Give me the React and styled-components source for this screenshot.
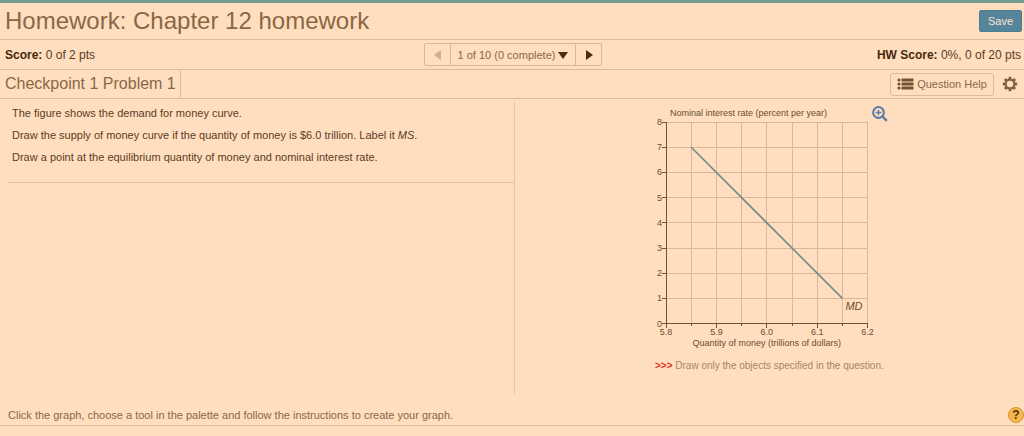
import React from 'react';
import styled, { createGlobalStyle } from 'styled-components';

const GlobalStyle = createGlobalStyle`
  * {
    box-sizing: border-box;
  }

  body {
    margin: 0;
    background: #ffdebf;
    color: #5a3c1e;
    font-family: 'Liberation Sans', Arial, sans-serif;
    font-size: 12px;
  }

  button {
    font-family: inherit;
    cursor: pointer;
  }
`;

const Page = styled.div`
  border-top: 3px solid #759c8f;
`;

const Bar = styled.div`
  display: flex;
  align-items: center;
  justify-content: space-between;
  height: ${({ $height }) => $height}px;
  padding: 0 3px 0 5px;
  border-bottom: 1px solid #dcbb9d;
`;

const Title = styled.h1`
  margin: 0;
  font-size: 24px;
  line-height: 32px;
  font-weight: 400;
  color: #8a6745;
`;

const SaveButton = styled.button`
  width: 43px;
  height: 22px;
  margin-right: -1px;
  padding: 0;
  border: 1px solid #4f7d94;
  border-radius: 2px;
  background: #55849b;
  color: #ffe6cf;
  font-size: 11px;
`;

const ScoreBar = styled(Bar)`
  display: grid;
  grid-template-columns: 1fr auto 1fr;
`;

const Score = styled.div`
  text-align: ${({ $align }) => $align || 'left'};

  b {
    color: #45290c;
  }
`;

const Pager = styled.div`
  display: flex;
  height: 23px;
  border: 1px solid #d9b797;
  border-radius: 2px;
`;

const PagerButton = styled.button`
  display: flex;
  align-items: center;
  justify-content: center;
  gap: 3px;
  width: ${({ $width }) => $width}px;
  padding: 0;
  border: none;
  border-right: 1px solid #d9b797;
  background: none;
  color: #8a6745;
  font-size: 11px;

  &:last-child {
    border-right: none;
  }
`;

const Subtitle = styled.h2`
  display: flex;
  align-items: center;
  align-self: stretch;
  margin: 0;
  padding-right: 4px;
  border-right: 1px solid #dcbb9d;
  font-size: 16px;
  font-weight: 400;
  color: #8a6745;
`;

const Tools = styled.div`
  display: flex;
  align-items: center;
  gap: 8px;
  padding-right: 3px;
`;

const HelpButton = styled.button`
  display: flex;
  align-items: center;
  justify-content: center;
  gap: 3px;
  width: 104px;
  height: 23px;
  padding: 0;
  border: 1px solid #dcbb9d;
  border-radius: 3px;
  background: none;
  color: #8a6745;
  font-size: 11px;
`;

const IconButton = styled.button`
  display: flex;
  padding: 0;
  border: none;
  background: none;
`;

const Content = styled.main`
  display: grid;
  grid-template-columns: 1fr 1fr;
  padding: 3px 2px 0 8px;
`;

const Question = styled.section`
  border-right: 1px solid #e5c3a4;
`;

const Prompt = styled.div`
  padding: 0 4px 14px;
  border-bottom: 1px solid #e5c3a4;
  font-size: 11px;
  line-height: 22px;

  p {
    margin: 0;
  }
`;

const GraphArea = styled.section`
  display: flex;
  justify-content: center;
  padding-bottom: 20px;
`;

const Graph = styled.figure`
  position: relative;
  width: 235px;
  margin: 0;
`;

const ZoomButton = styled(IconButton)`
  position: absolute;
  top: 4px;
  right: -2px;
`;

const Chart = styled.svg`
  display: block;
  font-size: 9px;
  fill: #6b4c2e;
`;

const Hint = styled.figcaption`
  padding: 8px 0 0 4px;
  font-size: 10px;
  line-height: 16px;
  white-space: nowrap;
  color: #a9845f;

  b {
    color: #e0301e;
  }
`;

const Footer = styled.footer`
  display: flex;
  align-items: center;
  justify-content: space-between;
  height: 32px;
  padding: 10px 0 0 8px;
  border-bottom: 1px solid #dcbb9d;
  font-size: 11px;
  color: #8a6745;
`;

const HelpBadge = styled.button`
  width: 16px;
  height: 16px;
  padding: 0;
  border: 1px solid #d9912f;
  border-radius: 50%;
  background: #f7b64a;
  color: #50300f;
  font-size: 12px;
  font-weight: 700;
  line-height: 14px;
`;

const ListIcon = () => (
  <svg width="17" height="12" viewBox="0 0 17 12" fill="#735131">
    {[0, 4, 8].map((y) => (
      <g key={y}>
        <circle cx="2" cy={y + 2} r="1.6" />
        <rect x="4.5" y={y + 0.5} width="12" height="3" rx="0.5" />
      </g>
    ))}
  </svg>
);

const GearIcon = () => (
  <svg width="16" height="16" viewBox="0 0 16 16" fill="none" stroke="#806040">
    <circle cx="8" cy="8" r="4.4" strokeWidth="2.2" />
    {[0, 45, 90, 135, 180, 225, 270, 315].map((angle) => (
      <path key={angle} d="M8 3V0.8" strokeWidth="2.8" transform={`rotate(${angle} 8 8)`} />
    ))}
  </svg>
);

const ZoomIcon = () => (
  <svg width="16" height="16" viewBox="0 0 16 16" fill="none" stroke="#5a7ba6">
    <circle cx="6.5" cy="6.5" r="5.4" strokeWidth="2" />
    <path d="M3.7 6.5H9.3M6.5 3.7V9.3" strokeWidth="1.4" />
    <path d="M10.5 10.5L14.8 14.8" strokeWidth="2.4" />
  </svg>
);

const Arrow = ({ d, color }) => (
  <svg width="10" height="10" viewBox="0 0 10 10" fill={color}>
    <path d={d} />
  </svg>
);

// plot area of the chart, in svg units
const LEFT = 15;
const TOP = 20;
const STEP = 25.2;
const SIZE = STEP * 8;
const steps = [0, 1, 2, 3, 4, 5, 6, 7, 8];
const xLabels = ['5.8', '5.9', '6.0', '6.1', '6.2'];

const MoneyChart = () => (
  <Chart width="235" height="248" viewBox="0 0 235 248" role="img" aria-label="Demand for money curve">
    <text x={LEFT + 4} y="14">Nominal interest rate (percent per year)</text>

    <g stroke="#d9b797" shapeRendering="crispEdges">
      {steps.map((i) => (
        <React.Fragment key={i}>
          <path d={`M${LEFT + i * STEP} ${TOP}v${SIZE}`} />
          <path d={`M${LEFT} ${TOP + i * STEP}h${SIZE}`} />
        </React.Fragment>
      ))}
    </g>

    <g stroke="#735131" shapeRendering="crispEdges">
      <path d={`M${LEFT} ${TOP}v${SIZE}h${SIZE}`} fill="none" />
      {steps.map((i) => (
        <React.Fragment key={i}>
          <path d={`M${LEFT + i * STEP} ${TOP + SIZE}v${i % 2 ? 2 : 4}`} />
          <path d={`M${LEFT - 4} ${TOP + i * STEP}h4`} />
        </React.Fragment>
      ))}
    </g>

    {steps.map((i) => (
      <text key={i} x={LEFT - 4} y={TOP + (8 - i) * STEP + 3} textAnchor="end">{i}</text>
    ))}
    {xLabels.map((label, i) => (
      <text key={label} x={LEFT + i * 2 * STEP} y={TOP + SIZE + 11} textAnchor="middle">{label}</text>
    ))}

    <path
      d={`M${LEFT + STEP} ${TOP + STEP}L${LEFT + 7 * STEP} ${TOP + 7 * STEP}`}
      stroke="#6f8e8b"
      strokeWidth="1.6"
    />
    <text x={LEFT + 7 * STEP + 3} y={TOP + 7 * STEP + 12} fontSize="11" fontStyle="italic">MD</text>
    <text x={LEFT + SIZE / 2} y={TOP + SIZE + 22} textAnchor="middle">
      Quantity of money (trillions of dollars)
    </text>
  </Chart>
);

const App = () => {
  return (
    <>
      <GlobalStyle />
      <Page>
        <Bar $height={37}>
          <Title>Homework: Chapter 12 homework</Title>
          <SaveButton type="button">Save</SaveButton>
        </Bar>

        <ScoreBar $height={30}>
          <Score><b>Score:</b> 0 of 2 pts</Score>
          <Pager>
            <PagerButton type="button" $width={26} aria-label="Previous question">
              <Arrow d="M8 0V10L1 5Z" color="#d3ad89" />
            </PagerButton>
            <PagerButton type="button" $width={125}>
              1 of 10 (0 complete)
              <Arrow d="M0 2H10L5 9Z" color="#4a2c10" />
            </PagerButton>
            <PagerButton type="button" $width={25} aria-label="Next question">
              <Arrow d="M2 0V10L9 5Z" color="#4a2c10" />
            </PagerButton>
          </Pager>
          <Score $align="right"><b>HW Score:</b> 0%, 0 of 20 pts</Score>
        </ScoreBar>

        <Bar $height={29}>
          <Subtitle>Checkpoint 1 Problem 1</Subtitle>
          <Tools>
            <HelpButton type="button">
              <ListIcon />
              Question Help
            </HelpButton>
            <IconButton type="button" aria-label="Settings">
              <GearIcon />
            </IconButton>
          </Tools>
        </Bar>

        <Content>
          <Question>
            <Prompt>
              <p>The figure shows the demand for money curve.</p>
              <p>Draw the supply of money curve if the quantity of money is $6.0 trillion. Label it <i>MS</i>.</p>
              <p>Draw a point at the equilibrium quantity of money and nominal interest rate.</p>
            </Prompt>
          </Question>
          <GraphArea>
            <Graph>
              <MoneyChart />
              <ZoomButton type="button" aria-label="Enlarge graph">
                <ZoomIcon />
              </ZoomButton>
              <Hint><b>&gt;&gt;&gt;</b> Draw only the objects specified in the question.</Hint>
            </Graph>
          </GraphArea>
        </Content>

        <Footer>
          <span>Click the graph, choose a tool in the palette and follow the instructions to create your graph.</span>
          <HelpBadge type="button" aria-label="Help">?</HelpBadge>
        </Footer>
      </Page>
    </>
  );
};

export default App;
